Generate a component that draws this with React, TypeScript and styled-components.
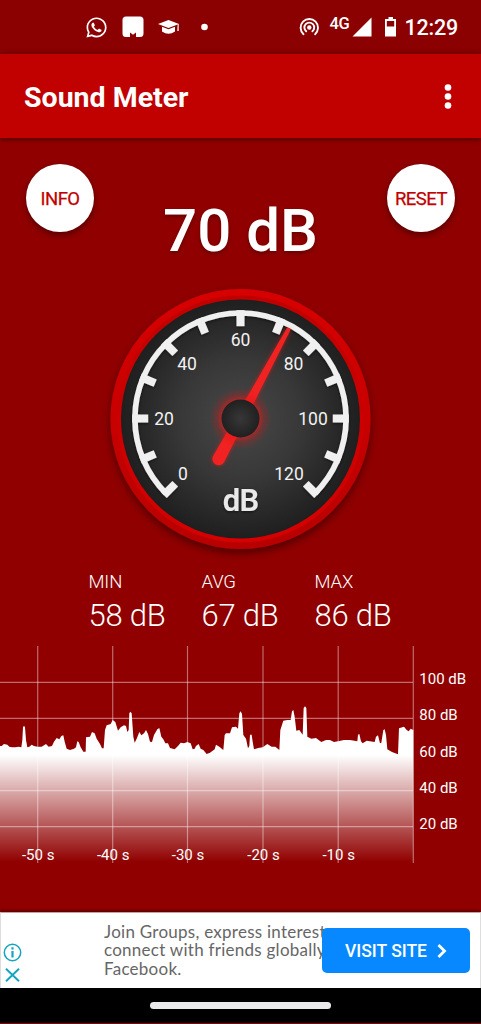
import React from 'react';
import styled, { createGlobalStyle } from 'styled-components';
import { FaWhatsapp } from 'react-icons/fa';

const GlobalStyle = createGlobalStyle`
  * { box-sizing: border-box; }
  body {
    margin: 0;
    background: #900000;
    font-family: Roboto, "Liberation Sans", sans-serif;
    color: #fff;
  }
  svg { display: block; flex: none; }
`;

const Screen = styled.div`
  width: 481px;
  height: 1024px;
  display: flex;
  flex-direction: column;
  overflow: hidden;
  background: #900000;
`;

const StatusBar = styled.div`
  height: 54px;
  flex: none;
  display: flex;
  align-items: center;
  padding: 0 23px 0 85px;
  background: #8b0000;
`;

const StatusGroup = styled.div<{ $gap: number; $end?: boolean }>`
  display: flex;
  align-items: center;
  gap: ${p => p.$gap}px;
  margin-left: ${p => (p.$end ? 'auto' : '0')};
`;

const Network = styled.span`
  font-size: 16.5px;
  line-height: 18px;
  font-weight: 500;
  letter-spacing: -0.3px;
  margin: -7px 3px 0 9px;
`;

const Clock = styled.span`
  font-size: 21.5px;
  line-height: 26px;
  font-weight: 500;
  margin: 2px 0 0 7px;
  letter-spacing: -0.2px;
`;

const AppBar = styled.header`
  height: 84px;
  flex: none;
  display: flex;
  align-items: center;
  justify-content: space-between;
  padding: 2px 28px 0 24px;
  background: #c10000;
  box-shadow: 0 1px 5px rgba(0, 0, 0, 0.55);
  z-index: 1;
`;

const Title = styled.h1`
  margin: 2px 0 0;
  font-size: 28.5px;
  line-height: 34px;
  font-weight: 700;
`;

const TopRow = styled.div`
  display: flex;
  justify-content: space-between;
  align-items: flex-start;
  height: 146px;
  flex: none;
  padding: 26px 26px 0;
`;

const RoundButton = styled.button`
  width: 68px;
  height: 68px;
  flex: none;
  padding: 1px 0 0;
  border: 0;
  border-radius: 50%;
  background: #fff;
  color: #c10000;
  font: 400 18.5px/20px Roboto, sans-serif;
  letter-spacing: -0.5px;
  -webkit-text-stroke: 0.25px #c10000;
  box-shadow: 0 3px 6px rgba(0, 0, 0, 0.4);
`;

const Reading = styled.div`
  margin-top: 32px;
  font-size: 60px;
  line-height: 70px;
  font-weight: 500;
  white-space: nowrap;
  text-shadow: 0 2px 4px rgba(0, 0, 0, 0.3);
`;

const GaugeArea = styled.div`
  height: 284px;
  flex: none;
  display: flex;
  justify-content: center;
`;

const Stats = styled.div`
  display: grid;
  grid-template-columns: repeat(3, 113px);
  padding: 4px 0 0 88.5px;
  height: 78px;
  flex: none;
  font-weight: 300;
`;

const StatLabel = styled.div`
  font-size: 18.5px;
  line-height: 20px;
  letter-spacing: -0.15px;
`;

const StatValue = styled.div`
  margin-top: 6px;
  font-size: 31px;
  line-height: 36px;
  letter-spacing: -0.25px;
`;

const ChartArea = styled.div`
  height: 266px;
  flex: none;
`;

const Ad = styled.div`
  height: 76px;
  flex: none;
  display: flex;
  align-items: center;
  padding: 0 10px 0 2px;
  background: #fff;
  border-top: 1px solid #c9a0a0;
  border-left: 1px solid #ddd;
  border-right: 1px solid #ddd;
  box-shadow: 0 -1px 3px rgba(0, 0, 0, 0.5);
  font-family: Lato, sans-serif;
`;

const AdMarks = styled.div`
  display: flex;
  flex-direction: column;
  align-items: center;
  gap: 6px;
  width: 19px;
  margin-top: 24px;
`;

const AdCopy = styled.p`
  width: 218px;
  flex: none;
  margin: 0 0 0 82px;
  color: #666;
  font-size: 17px;
  line-height: 18.5px;
  letter-spacing: 0.26px;
  white-space: nowrap;
`;

const VisitButton = styled.button`
  width: 148px;
  height: 45px;
  flex: none;
  position: relative;
  display: flex;
  align-items: center;
  justify-content: center;
  gap: 10px;
  border: 0;
  border-radius: 5px;
  background: #0788ff;
  color: #fff;
  padding: 0;
  font: 500 17.5px/20px Roboto, sans-serif;
`;

const NavBar = styled.div`
  height: 35px;
  flex: none;
  display: flex;
  justify-content: center;
  padding-top: 14px;
  background: #000;
`;

const HomePill = styled.div`
  width: 181px;
  height: 7px;
  border-radius: 4px;
  background: #ebebeb;
`;

const ticks = Array.from({ length: 13 }, (_, i) => -135 + i * 22.5);

const dialLabels: [string, number, number][] = [
  ['0', 182.5, 479.5],
  ['20', 163.5, 424.5],
  ['40', 186.5, 370],
  ['60', 240, 346],
  ['80', 293, 370],
  ['100', 312.5, 424.5],
  ['120', 288.5, 479.5],
];

function Gauge() {
  return (
    <svg width="300" height="284" viewBox="90.5 284 300 284" fontFamily="Roboto, sans-serif">
      <defs>
        <radialGradient id="face">
          <stop offset="0" stopColor="#484848" />
          <stop offset="0.5" stopColor="#383838" />
          <stop offset="1" stopColor="#1f1f1f" />
        </radialGradient>
        <linearGradient id="rim" x1="0" y1="0" x2="0" y2="1">
          <stop offset="0" stopColor="#d80000" />
          <stop offset="1" stopColor="#b80000" />
        </linearGradient>
        <linearGradient id="rimInner" x1="0" y1="0" x2="0" y2="1">
          <stop offset="0" stopColor="#c00000" />
          <stop offset="1" stopColor="#d60000" />
        </linearGradient>
        <radialGradient id="glow">
          <stop offset="0.6" stopColor="#f01818" stopOpacity="0.6" />
          <stop offset="0.76" stopColor="#e01010" stopOpacity="0.25" />
          <stop offset="1" stopColor="#e01010" stopOpacity="0" />
        </radialGradient>
        <radialGradient id="hub">
          <stop offset="0" stopColor="#373737" />
          <stop offset="1" stopColor="#202020" />
        </radialGradient>
        <filter id="drop" x="-20%" y="-20%" width="140%" height="140%">
          <feDropShadow dx="0" dy="4" stdDeviation="4" floodColor="#000" floodOpacity="0.45" />
        </filter>
        <filter id="halo" x="-50%" y="-50%" width="200%" height="200%">
          <feGaussianBlur stdDeviation="2.5" />
        </filter>
        <filter id="soft" x="-20%" y="-20%" width="140%" height="140%">
          <feDropShadow dx="0" dy="1" stdDeviation="1.5" floodColor="#000" floodOpacity="0.6" />
        </filter>
      </defs>
      <circle cx="240" cy="419" r="130" fill="url(#rim)" filter="url(#drop)" />
      <circle cx="240" cy="419" r="123.5" fill="url(#rimInner)" />
      <circle cx="240" cy="419" r="119.5" fill="url(#face)" />
      <g filter="url(#soft)" stroke="#f0f0f0" fill="none">
        <path d="M165.3 493.2 A105.6 105.6 0 1 1 314.7 493.2" strokeWidth="5.6" />
        {ticks.map(a => (
          <path key={a} d="M240 310.2V326.2" strokeWidth="8" transform={`rotate(${a} 240 418.5)`} />
        ))}
      </g>
      <g fill="#f2f2f2" fontSize="17.5" textAnchor="middle">
        {dialLabels.map(([t, x, y]) => (
          <text key={t} x={x} y={y}>{t}</text>
        ))}
      </g>
      <text x="240" y="510.500" fill="#e9e9e9" fontSize="31" fontWeight="600" letterSpacing="-0.8" textAnchor="middle" filter="url(#soft)">dB</text>
      <g transform="rotate(28.3 240 418.5)">
        <path d="M238 317H242L246.300 464.500A6.300 6.300 0 0 1 233.700 464.500Z" fill="#f01818" opacity="0.55" filter="url(#halo)" />
        <path d="M238 316H242L246.300 464.500A6.300 6.300 0 0 1 233.700 464.500Z" fill="#f12222" />
      </g>
      <circle cx="240" cy="418.5" r="31" fill="url(#glow)" />
      <circle cx="240" cy="418.5" r="19" fill="url(#hub)" />
    </svg>
  );
}

/* Level trace in thirds of a pixel, measured from the chart's top-left corner. */
const trace =
  '0,318 5,318 12,312 22,314 28,320 36,322 46,322 56,320 64,322 67,300 69,262 72,257 75,262 78,300 82,322 88,320 95,314 102,318 112,320 125,320 138,312 146,320 156,318 162,305 170,294 178,298 184,288 190,286 194,305 200,326 210,330 222,326 228,322 232,304 236,306 242,322 250,335 257,335 258,292 270,290 276,276 284,280 290,296 300,312 306,325 311,325 315,270 320,256 332,252 338,240 346,246 354,272 362,262 372,256 378,258 382,276 386,270 388,220 391,215 395,220 400,290 404,308 410,296 418,276 424,286 432,280 438,270 444,282 450,305 456,306 462,285 472,268 478,264 484,290 490,298 496,310 504,310 510,324 524,328 534,318 542,308 552,310 562,306 572,310 578,328 584,326 588,318 596,312 602,326 610,330 620,342 630,338 644,328 648,314 658,320 670,330 674,285 678,280 690,280 696,262 708,260 714,266 718,220 722,214 726,222 730,285 738,296 744,325 748,318 750,284 755,284 758,305 762,328 775,324 788,322 802,312 815,320 826,320 838,330 841,270 850,242 862,240 872,240 876,214 880,210 884,230 889,272 898,270 908,284 911,204 915,199 919,204 922,290 934,296 948,294 964,306 978,300 990,300 1002,306 1014,304 1032,300 1050,300 1072,304 1074,284 1078,282 1083,304 1088,310 1100,302 1124,306 1128,290 1134,286 1140,310 1144,308 1150,270 1154,268 1158,285 1162,328 1176,336 1194,343 1197,265 1212,260 1220,270 1226,274 1232,266 1240,270';

const levels: [string, number][] = [
  ['100 dB', 682.3], ['80 dB', 718.3], ['60 dB', 754.5], ['40 dB', 790.6], ['20 dB', 826.7],
];
const times: [string, number][] = [
  ['-50 s', 37.7], ['-40 s', 112.7], ['-30 s', 187.5], ['-20 s', 263], ['-10 s', 338.2],
];

function Chart() {
  return (
    <svg width="481" height="266" viewBox="0 646 481 266" fontFamily="Roboto, sans-serif">
      <defs>
        <linearGradient id="fade" gradientUnits="userSpaceOnUse" x1="0" y1="345" x2="0" y2="666">
          <stop offset="0" stopColor="#fff" />
          <stop offset="1" stopColor="#fff" stopOpacity="0" />
        </linearGradient>
      </defs>
      <polygon
        points={`0,666 ${trace} 1240,666`}
        transform="translate(0 640) scale(0.33333)"
        fill="url(#fade)"
      />
      <g stroke="#fff" strokeOpacity="0.42" strokeWidth="1.2">
        {levels.map(([t, y]) => <line key={t} x1="0" x2="413" y1={y} y2={y} />)}
        {times.map(([t, x]) => <line key={t} x1={x} x2={x} y1="646" y2="863" />)}
        <line x1="413.3" x2="413.3" y1="646" y2="863" />
      </g>
      <g fill="#fff" fontSize="15">
        {levels.map(([t, y]) => <text key={t} x="419.3" y={y + 2}>{t}</text>)}
        {times.map(([t, x]) => <text key={t} x={x + 0.5} y="860" textAnchor="middle">{t}</text>)}
      </g>
    </svg>
  );
}

const stats = [
  ['MIN', '58 dB'],
  ['AVG', '67 dB'],
  ['MAX', '86 dB'],
];

export default function App() {
  return (
    <>
      <GlobalStyle />
      <Screen>
        <StatusBar>
          <StatusGroup $gap={14}>
            <FaWhatsapp size={23} />
            <svg width="22" height="22" viewBox="0 0 22 22" fill="#fff">
              <path d="M4 0.5H18A3.5 3.5 0 0 1 21.500 4V17.500A3.500 3.500 0 0 1 18 21H14V16.500L11 18.800L8 16.500V21H4A3.500 3.500 0 0 1 .5 17.500V4A3.500 3.500 0 0 1 4 .5Z" />
            </svg>
            <svg width="22" height="16" viewBox="0 0 22 16" fill="#fff">
              <path d="M0 5L10.500 1L21 5L10.500 9Z" />
              <path d="M4 7.800L10.500 10.200L17 7.800V12.500Q10.500 17 4 12.500Z" />
              <path d="M19.700 5H20.700V12H19.300Z" />
            </svg>
            <svg width="22" height="8" viewBox="0 0 22 8"><circle cx="10.500" cy="4" r="3.300" fill="#fff" /></svg>
          </StatusGroup>
          <StatusGroup $gap={0} $end>
            <svg width="21" height="20" viewBox="0 0 21 20" fill="none" stroke="#fff" strokeWidth="1.900" strokeLinecap="round">
              <circle cx="10.300" cy="10.500" r="2.200" fill="#fff" stroke="none" />
              <path d="M4.500 17.200A8.700 8.700 0 1 1 16.100 17.200" />
              <path d="M7.200 14.300A4.900 4.900 0 1 1 13.400 14.300" />
            </svg>
            <Network>4G</Network>
            <svg width="20" height="20" viewBox="0 0 20 20"><path d="M0.500 19.500L19.500 0.500V19.500Z" fill="#fff" /></svg>
            <svg width="25" height="22" viewBox="0 0 25 22">
              <path d="M16.500 1H21V3H24V20.500H13V3H16.500Z" fill="#fff" />
              <path d="M14.800 5H22.200V10.500H14.800Z" fill="#8b0000" />
            </svg>
            <Clock>12:29</Clock>
          </StatusGroup>
        </StatusBar>
        <AppBar>
          <Title>Sound Meter</Title>
          <svg width="10" height="28" viewBox="0 0 10 28" fill="#fff">
            <circle cx="5" cy="4.500" r="3.300" />
            <circle cx="5" cy="13.500" r="3.300" />
            <circle cx="5" cy="22.500" r="3.300" />
          </svg>
        </AppBar>
        <TopRow>
          <RoundButton>INFO</RoundButton>
          <Reading>70 dB</Reading>
          <RoundButton>RESET</RoundButton>
        </TopRow>
        <GaugeArea><Gauge /></GaugeArea>
        <Stats>
          {stats.map(([label, value]) => (
            <div key={label}>
              <StatLabel>{label}</StatLabel>
              <StatValue>{value}</StatValue>
            </div>
          ))}
        </Stats>
        <ChartArea><Chart /></ChartArea>
        <Ad>
          <AdMarks>
            <svg width="19" height="19" viewBox="0 0 19 19" fill="none" stroke="#12a5c0">
              <circle cx="9.500" cy="9.500" r="8.200" strokeWidth="1.500" />
              <path d="M9.500 8V14.500M9.500 4.200V6.400" strokeWidth="2.200" />
            </svg>
            <svg width="15" height="14" viewBox="0 0 15 14" fill="none" stroke="#12a5c0" strokeWidth="1.900">
              <path d="M1 .7L14 13.300M14 .7L1 13.300" />
            </svg>
          </AdMarks>
          <AdCopy>Join Groups, express interest<br />connect with friends globally<br />Facebook.</AdCopy>
          <VisitButton>
            VISIT SITE
            <svg width="10" height="14" viewBox="0 0 10 14" fill="none" stroke="#fff" strokeWidth="2.800"><path d="M1.500 1L7.500 7L1.500 13" /></svg>
          </VisitButton>
        </Ad>
        <NavBar><HomePill /></NavBar>
      </Screen>
    </>
  );
}
